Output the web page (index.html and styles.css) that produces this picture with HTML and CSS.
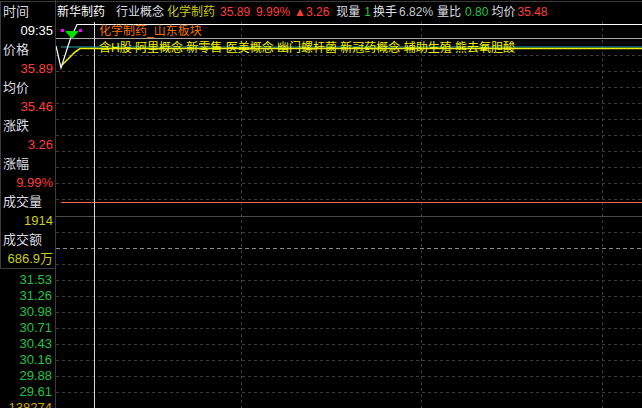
FILE: index.html
```html
<!DOCTYPE html>
<html lang="zh-CN">
<head>
<meta charset="utf-8">
<title>新华制药 分时</title>
<link rel="stylesheet" href="styles.css">
</head>
<body>
<div class="screen">
  <aside class="side">
    <div class="info">
      <div class="row lbl">时间</div>
      <div class="row val white">09:35</div>
      <div class="row lbl">价格</div>
      <div class="row val red">35.89</div>
      <div class="row lbl">均价</div>
      <div class="row val red">35.46</div>
      <div class="row lbl">涨跌</div>
      <div class="row val red">3.26</div>
      <div class="row lbl">涨幅</div>
      <div class="row val red">9.99%</div>
      <div class="row lbl">成交量</div>
      <div class="row val yellow">1914</div>
      <div class="row lbl">成交额</div>
      <div class="row val yellow">686.9万</div>
    </div>
    <div class="scale">
      <div class="tick">31.53</div>
      <div class="tick">31.26</div>
      <div class="tick">30.98</div>
      <div class="tick">30.71</div>
      <div class="tick">30.43</div>
      <div class="tick">30.16</div>
      <div class="tick">29.88</div>
      <div class="tick">29.61</div>
      <div class="tick vol">138274</div>
    </div>
  </aside>
  <main class="chart">
    <svg class="canvas" width="586" height="408" viewBox="0 0 586 408" xmlns="http://www.w3.org/2000/svg">
      <line x1="0" y1="1.5" x2="586" y2="1.5" stroke="#3a3a3a" stroke-width="1"/>
      <g stroke="#3c3c3c" stroke-width="1" stroke-dasharray="3 3">
        <line x1="0" y1="55.5" x2="586" y2="55.5"/>
        <line x1="0" y1="71.5" x2="586" y2="71.5"/>
        <line x1="0" y1="87.5" x2="586" y2="87.5"/>
        <line x1="0" y1="103.5" x2="586" y2="103.5"/>
        <line x1="0" y1="119.5" x2="586" y2="119.5"/>
        <line x1="0" y1="135.5" x2="586" y2="135.5"/>
        <line x1="0" y1="151.5" x2="586" y2="151.5"/>
        <line x1="0" y1="167.5" x2="586" y2="167.5"/>
        <line x1="0" y1="183.5" x2="586" y2="183.5"/>
        <line x1="0" y1="199.5" x2="586" y2="199.5"/>
        <line x1="0" y1="232.5" x2="586" y2="232.5"/>
        <line x1="0" y1="264.5" x2="586" y2="264.5"/>
        <line x1="0" y1="280.5" x2="586" y2="280.5"/>
        <line x1="0" y1="296.5" x2="586" y2="296.5"/>
        <line x1="0" y1="312.5" x2="586" y2="312.5"/>
        <line x1="0" y1="328.5" x2="586" y2="328.5"/>
        <line x1="0" y1="344.5" x2="586" y2="344.5"/>
        <line x1="0" y1="360.5" x2="586" y2="360.5"/>
        <line x1="0" y1="376.5" x2="586" y2="376.5"/>
        <line x1="0" y1="392.5" x2="586" y2="392.5"/>
        <line x1="185.5" y1="22" x2="185.5" y2="408"/>
        <line x1="365.5" y1="22" x2="365.5" y2="408"/>
        <line x1="546.5" y1="22" x2="546.5" y2="408"/>
      </g>
      <line x1="0" y1="248.5" x2="586" y2="248.5" stroke="#8a8a8a" stroke-width="1" stroke-dasharray="4 3"/>
      <line x1="0" y1="216.5" x2="586" y2="216.5" stroke="#4a4a4a" stroke-width="1"/>
      <line x1="5" y1="202.5" x2="586" y2="202.5" stroke="#ff5a5a" stroke-width="1"/>
      <line x1="0" y1="38.5" x2="586" y2="38.5" stroke="#a8a8a8" stroke-width="1"/>
      <line x1="38.5" y1="22" x2="38.5" y2="408" stroke="#d8d8d8" stroke-width="1"/>
      <line x1="5" y1="47" x2="586" y2="47" stroke="#1ea5b0" stroke-width="1"/>
      <polyline points="6,65 10,61 14,57 19,52 24,48.5 586,48.5" fill="none" stroke="#f0f000" stroke-width="1.6"/>
      <polyline points="0,46 5,68 14,40 21,24.5 586,24.5" fill="none" stroke="#ffffff" stroke-width="1.2"/>
      <polygon points="9,31 23,31 16,39" fill="#00e000"/>
      <rect x="5" y="29" width="3" height="3" fill="#ff00ff"/>
      <rect x="23" y="29" width="3" height="3" fill="#ff00ff"/>
    </svg>
    <div class="title">
      <span class="name">新华制药</span>
      <span class="g11">行业概念</span>
      <span class="yellow g3">化学制药</span>
      <span class="red g5">35.89</span>
      <span class="red g6">9.99%</span>
      <span class="red g4">▲3.26</span>
      <span class="g7">现量</span>
      <span class="green g4">1</span>
      <span class="g2">换手</span>
      <span class="blue g2">6.82%</span>
      <span class="g4">量比</span>
      <span class="green g4">0.80</span>
      <span class="g3">均价</span>
      <span class="red g2">35.48</span>
    </div>
    <div class="sector">化学制药_山东板块</div>
    <div class="concepts">含H股 阿里概念 新零售 医美概念 幽门螺杆菌 新冠药概念 辅助生殖 熊去氧胆酸</div>
  </main>
</div>
</body>
</html>
```

FILE: styles.css
```css
html, body {
  margin: 0;
  padding: 0;
  background: #000;
}

body {
  width: 642px;
  height: 408px;
  overflow: hidden;
  font-family: "Liberation Sans", "Noto Sans CJK SC", sans-serif;
  color: #dcdfe3;
}

.screen {
  display: flex;
  width: 642px;
  height: 408px;
}

.side {
  width: 55px;
  flex: none;
  border-right: 1px solid #3c3c3c;
  font-size: 13px;
}

.info {
  margin-top: 1px;
  border-top: 1px solid #3c3c3c;
  border-left: 1px solid #3c3c3c;
  border-bottom: 1px solid #3c3c3c;
}

.row {
  height: 19px;
  line-height: 19px;
  white-space: nowrap;
}

.lbl {
  padding-left: 2px;
  color: #dadde2;
}

.val {
  text-align: right;
  padding-right: 2px;
}

.scale {
  margin-top: 3px;
}

.tick {
  height: 16px;
  line-height: 16px;
  text-align: right;
  padding-right: 3px;
  color: #22c444;
}

.tick.vol {
  color: #d8a800;
}

.white { color: #ffffff; }
.red { color: #ff3c3c; }
.yellow { color: #cccc10; }
.green { color: #22c444; }
.blue { color: #c4ccd6; }

.chart {
  position: relative;
  flex: 1;
  height: 408px;
  overflow: hidden;
}

.canvas {
  position: absolute;
  left: 0;
  top: 0;
}

.title {
  position: relative;
  display: flex;
  height: 20px;
  padding-top: 2px;
  padding-left: 1px;
  line-height: 20px;
  font-size: 12px;
  white-space: nowrap;
  color: #dcdfe3;
}

.title .name { color: #ffffff; }
.title .g1 { margin-left: 1px; }
.title .g2 { margin-left: 2px; }
.title .g3 { margin-left: 3px; }
.title .g4 { margin-left: 4px; }
.title .g5 { margin-left: 5px; }
.title .g6 { margin-left: 6px; }
.title .g7 { margin-left: 7px; }
.title .g11 { margin-left: 11px; }

.sector {
  position: relative;
  margin-top: 2px;
  height: 14px;
  line-height: 14px;
  padding-left: 43px;
  font-size: 12px;
  color: #f07400;
  white-space: nowrap;
}

.concepts {
  position: relative;
  margin-top: 3px;
  height: 14px;
  line-height: 14px;
  padding-left: 43px;
  font-size: 12px;
  color: #f0f000;
  white-space: nowrap;
}
```
